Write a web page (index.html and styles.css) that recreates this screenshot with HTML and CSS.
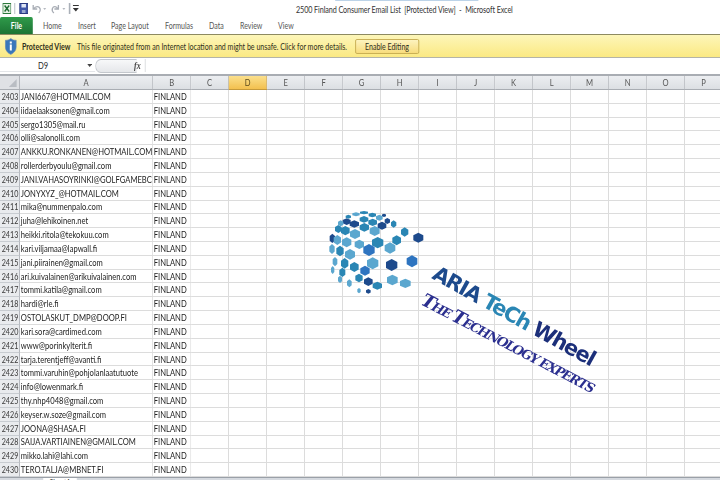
FILE: index.html
```html
<!DOCTYPE html>
<html lang="en">
<head>
<meta charset="utf-8">
<title>2500 Finland Consumer Email List</title>
<link rel="stylesheet" href="styles.css">
</head>
<body>
<div class="screen">
<div class="app">
  <header class="titlebar">
    <div class="qat">
      <svg class="ico-xl" viewBox="0 0 10 11" preserveAspectRatio="none"><rect x=".5" y=".5" width="9" height="10" fill="#e8f2e6" stroke="#2c7a3c"/><path d="M2.5 2.5l5 6M7.5 2.5l-5 6" stroke="#1d6b30" stroke-width="1.6"/></svg>
      <span class="qat-sep"></span>
      <svg class="ico-save" viewBox="0 0 10 11" preserveAspectRatio="none"><rect x=".5" y=".5" width="9" height="10" fill="#3f56a8" stroke="#2a3a80"/><rect x="2.5" y="1" width="5" height="3.5" fill="#dfe6f5"/><rect x="3" y="7" width="4" height="3" fill="#9aa8d0"/></svg>
      <svg class="ico-undo" viewBox="0 0 16 11" preserveAspectRatio="none"><path d="M2 2v4h4M2.5 6C4 3 8 2.500 9 6c.4 1.500-.5 3-1.500 4" fill="none" stroke="#a8adb5" stroke-width="1.300"/><path d="M12 5h3l-1.500 2z" fill="#b5b9c0"/></svg>
      <svg class="ico-undo" viewBox="0 0 16 11" preserveAspectRatio="none"><path d="M8 2v4H4M7.500 6C6 3 3 3 2 5.500c-.5 1.500.2 3.500 1.500 4.500" fill="none" stroke="#a8adb5" stroke-width="1.300"/><path d="M12 5h3l-1.500 2z" fill="#b5b9c0"/></svg>
      <span class="qat-sep"></span>
      <svg class="ico-more" viewBox="0 0 6 7" preserveAspectRatio="none"><path d="M0 .5h6" stroke="#333"/><path d="M0 3h6L3 6.500z" fill="#333"/></svg>
    </div>
    <div class="title">2500 Finland Consumer Email List&nbsp; [Protected View]&nbsp; -&nbsp; Microsoft Excel</div>
    <span class="title-glow"></span>
  </header>

  <nav class="tabs">
    <span class="tab-file">File</span>
    <span class="tab tab-home">Home</span>
    <span class="tab tab-insert">Insert</span>
    <span class="tab tab-layout">Page Layout</span>
    <span class="tab tab-formulas">Formulas</span>
    <span class="tab tab-data">Data</span>
    <span class="tab tab-review">Review</span>
    <span class="tab tab-view">View</span>
  </nav>

  <section class="notice">
    <svg class="shield" viewBox="0 0 12 17" preserveAspectRatio="none"><path d="M6 .5C4.500 1.800 2.500 2.300.5 2.300v6.500C.5 12.500 3 15 6 16.500c3-1.500 5.500-4 5.500-7.700V2.300C9.500 2.300 7.500 1.800 6 .5z" fill="#3a77bb" stroke="#6f8fb0" stroke-width=".6"/><rect x="5" y="6.500" width="2" height="6" fill="#fff"/><rect x="5" y="3.500" width="2" height="2" fill="#fff"/></svg>
    <strong class="notice-head">Protected View</strong>
    <span class="notice-text">This file originated from an Internet location and might be unsafe. Click for more details.</span>
    <span class="enable">Enable Editing</span>
  </section>

  <section class="formula">
    <div class="namebox"><span class="cellref">D9</span><svg class="caret" viewBox="0 0 6 4" preserveAspectRatio="none"><path d="M0 0h6L3 4z" fill="#444"/></svg></div>
    <div class="fxzone"><span class="pill"></span><em class="fx">fx</em></div>
    <div class="input"></div>
  </section>

  <main class="sheet">
    <div class="row head">
      <div class="rh corner"><svg viewBox="0 0 8 8" class="corner-tri" preserveAspectRatio="none"><path d="M8 0v8H0z" fill="#b9bdc3"/></svg></div>
      <div class="ch col-a">A</div><div class="ch col-b">B</div>
      <div class="ch col-n">C</div><div class="ch col-n sel">D</div><div class="ch col-n">E</div><div class="ch col-n">F</div><div class="ch col-n">G</div><div class="ch col-n">H</div><div class="ch col-n">I</div><div class="ch col-n">J</div><div class="ch col-n">K</div><div class="ch col-n">L</div><div class="ch col-n">M</div><div class="ch col-n">N</div><div class="ch col-n">O</div><div class="ch col-n">P</div>
    </div>
    <div class="row"><div class="rh">2403</div><div class="c col-a">JANI667@HOTMAIL.COM</div><div class="c col-b">FINLAND</div><div class="rest"></div></div>
    <div class="row"><div class="rh">2404</div><div class="c col-a">iidaelaaksonen@gmail.com</div><div class="c col-b">FINLAND</div><div class="rest"></div></div>
    <div class="row"><div class="rh">2405</div><div class="c col-a">sergo1305@mail.ru</div><div class="c col-b">FINLAND</div><div class="rest"></div></div>
    <div class="row"><div class="rh">2406</div><div class="c col-a">olli@salonolli.com</div><div class="c col-b">FINLAND</div><div class="rest"></div></div>
    <div class="row"><div class="rh">2407</div><div class="c col-a">ANKKU.RONKANEN@HOTMAIL.COM</div><div class="c col-b">FINLAND</div><div class="rest"></div></div>
    <div class="row"><div class="rh">2408</div><div class="c col-a">rollerderbyoulu@gmail.com</div><div class="c col-b">FINLAND</div><div class="rest"></div></div>
    <div class="row"><div class="rh">2409</div><div class="c col-a">JANI.VAHASOYRINKI@GOLFGAMEBC</div><div class="c col-b">FINLAND</div><div class="rest"></div></div>
    <div class="row"><div class="rh">2410</div><div class="c col-a">JONYXYZ_@HOTMAIL.COM</div><div class="c col-b">FINLAND</div><div class="rest"></div></div>
    <div class="row"><div class="rh">2411</div><div class="c col-a">mika@nummenpalo.com</div><div class="c col-b">FINLAND</div><div class="rest"></div></div>
    <div class="row"><div class="rh">2412</div><div class="c col-a">juha@lehikoinen.net</div><div class="c col-b">FINLAND</div><div class="rest"></div></div>
    <div class="row"><div class="rh">2413</div><div class="c col-a">heikki.ritola@tekokuu.com</div><div class="c col-b">FINLAND</div><div class="rest"></div></div>
    <div class="row"><div class="rh">2414</div><div class="c col-a">kari.viljamaa@lapwall.fi</div><div class="c col-b">FINLAND</div><div class="rest"></div></div>
    <div class="row"><div class="rh">2415</div><div class="c col-a">jani.piirainen@gmail.com</div><div class="c col-b">FINLAND</div><div class="rest"></div></div>
    <div class="row"><div class="rh">2416</div><div class="c col-a">ari.kuivalainen@arikuivalainen.com</div><div class="c col-b">FINLAND</div><div class="rest"></div></div>
    <div class="row"><div class="rh">2417</div><div class="c col-a">tommi.katila@gmail.com</div><div class="c col-b">FINLAND</div><div class="rest"></div></div>
    <div class="row"><div class="rh">2418</div><div class="c col-a">hardi@rle.fi</div><div class="c col-b">FINLAND</div><div class="rest"></div></div>
    <div class="row"><div class="rh">2419</div><div class="c col-a">OSTOLASKUT_DMP@DOOP.FI</div><div class="c col-b">FINLAND</div><div class="rest"></div></div>
    <div class="row"><div class="rh">2420</div><div class="c col-a">kari.sora@cardimed.com</div><div class="c col-b">FINLAND</div><div class="rest"></div></div>
    <div class="row"><div class="rh">2421</div><div class="c col-a">www@porinkylterit.fi</div><div class="c col-b">FINLAND</div><div class="rest"></div></div>
    <div class="row"><div class="rh">2422</div><div class="c col-a">tarja.terentjeff@avanti.fi</div><div class="c col-b">FINLAND</div><div class="rest"></div></div>
    <div class="row"><div class="rh">2423</div><div class="c col-a">tommi.varuhin@pohjolanlaatutuote</div><div class="c col-b">FINLAND</div><div class="rest"></div></div>
    <div class="row"><div class="rh">2424</div><div class="c col-a">info@lowenmark.fi</div><div class="c col-b">FINLAND</div><div class="rest"></div></div>
    <div class="row"><div class="rh">2425</div><div class="c col-a">thy.nhp4048@gmail.com</div><div class="c col-b">FINLAND</div><div class="rest"></div></div>
    <div class="row"><div class="rh">2426</div><div class="c col-a">keyser.w.soze@gmail.com</div><div class="c col-b">FINLAND</div><div class="rest"></div></div>
    <div class="row"><div class="rh">2427</div><div class="c col-a">JOONA@SHASA.FI</div><div class="c col-b">FINLAND</div><div class="rest"></div></div>
    <div class="row"><div class="rh">2428</div><div class="c col-a">SAIJA.VARTIAINEN@GMAIL.COM</div><div class="c col-b">FINLAND</div><div class="rest"></div></div>
    <div class="row"><div class="rh">2429</div><div class="c col-a">mikko.lahi@lahi.com</div><div class="c col-b">FINLAND</div><div class="rest"></div></div>
    <div class="row"><div class="rh">2430</div><div class="c col-a">TERO.TALJA@MBNET.FI</div><div class="c col-b">FINLAND</div><div class="rest"></div></div>
  </main>

  <footer class="sheettabs"><span class="sheet-tab">Sheet1</span></footer>
</div>

  <svg class="watermark" viewBox="0 0 720 480" aria-label="ARIA TeCh Wheel logo">
    <defs><polygon id="h" points="0,-1 1,-.5 1,.5 0,1 -1,.5 -1,-.5"/></defs>
    <g transform="translate(320 200) scale(.3333)">
      <g class="navy">
        <use href="#h" transform="translate(295 113) scale(15)"/><use href="#h" transform="translate(202 63) scale(8 9)"/><use href="#h" transform="translate(186 77) scale(13 12)"/><use href="#h" transform="translate(103 72) scale(14 11)"/><use href="#h" transform="translate(80 65) scale(12 10)"/><use href="#h" transform="translate(192 46) scale(6 5)"/><use href="#h" transform="translate(37 115) scale(8 14)"/><use href="#h" transform="translate(215 195) scale(17 18)"/><use href="#h" transform="translate(145 245) scale(13)"/><use href="#h" transform="translate(145 274) scale(7)"/>
      </g>
      <g class="teal">
        <use href="#h" transform="translate(254 96) scale(11 14)"/><use href="#h" transform="translate(221 72) scale(8 11)"/><use href="#h" transform="translate(133 82) scale(14 13)"/><use href="#h" transform="translate(132 58) scale(13 10)"/><use href="#h" transform="translate(158 67) scale(13 11)"/><use href="#h" transform="translate(157 45) scale(11 7)"/><use href="#h" transform="translate(132 38) scale(12 5)"/><use href="#h" transform="translate(85 50) scale(8 6)"/><use href="#h" transform="translate(76 92) scale(13 14)"/><use href="#h" transform="translate(55 87) scale(10 12)"/><use href="#h" transform="translate(173 128) scale(17)"/><use href="#h" transform="translate(230 121) scale(13 15)"/><use href="#h" transform="translate(60 153) scale(11 16)"/><use href="#h" transform="translate(74 190) scale(11 16)"/><use href="#h" transform="translate(103 201) scale(13 15)"/><use href="#h" transform="translate(67 217) scale(9 14)"/><use href="#h" transform="translate(117 234) scale(11 13)"/><use href="#h" transform="translate(172 257) scale(14 12)"/>
      </g>
      <g class="light">
        <use href="#h" transform="translate(164 93) scale(15)"/><use href="#h" transform="translate(178 53) scale(10 9)"/><use href="#h" transform="translate(108 43) scale(11 6)"/><use href="#h" transform="translate(62 70) scale(8 9)"/><use href="#h" transform="translate(105 102) scale(15)"/><use href="#h" transform="translate(210 144) scale(16 17)"/><use href="#h" transform="translate(80 127) scale(14 15)"/><use href="#h" transform="translate(52 120) scale(11 15)"/><use href="#h" transform="translate(118 133) scale(14)"/><use href="#h" transform="translate(36 147) scale(8 15)"/><use href="#h" transform="translate(90 163) scale(15 16)"/><use href="#h" transform="translate(158 190) scale(17 18)"/><use href="#h" transform="translate(45 185) scale(7 14)"/><use href="#h" transform="translate(217 240) scale(16)"/><use href="#h" transform="translate(256 250) scale(16 14)"/><use href="#h" transform="translate(117 272) scale(5 8)"/><use href="#h" transform="translate(88 250) scale(7 12)"/><use href="#h" transform="translate(60 238) scale(6 11)"/><use href="#h" transform="translate(38 210) scale(5 12)"/>
      </g>
      <g class="blue">
        <use href="#h" transform="translate(147 150) scale(17 18)"/><use href="#h" transform="translate(276 184) scale(16 18)"/><use href="#h" transform="translate(135 212) scale(14 15)"/>
      </g>
    </g>
    <text class="brand" transform="translate(431 278) rotate(29)" textLength="183" lengthAdjust="spacing"><tspan class="b-navy">ARIA </tspan><tspan class="b-teal">TeCh </tspan><tspan class="b-dark">Wheel</tspan></text>
    <text class="tag" transform="translate(420 304) rotate(27.500)" textLength="194" lengthAdjust="spacing"><tspan class="big">T</tspan>HE <tspan class="big">T</tspan>ECHNOLOGY EXPERTS</text>
  </svg>
</div>
</body>
</html>
```

FILE: styles.css
```css
* { box-sizing: border-box; margin: 0; padding: 0; }
html, body { width: 720px; height: 480px; overflow: hidden; background: #fff; }
body { font-family: Lato, "Liberation Sans", sans-serif; color: #2a2a2a; }

/* The source capture is squeezed horizontally, so the window is laid out 900px wide and narrowed to 720px. */
.screen { position: relative; width: 720px; height: 480px; overflow: hidden; filter: blur(.35px); }
.app { width: 900px; height: 480px; display: flex; flex-direction: column; transform: scaleX(.8); transform-origin: 0 0; }

/* title bar */
.titlebar { position: relative; height: 17px; flex: none; display: flex; align-items: center; background: #fff; }
.qat { display: flex; align-items: center; gap: 3.75px; padding-left: 1.25px; width: 370px; }
.ico-xl { width: 11.25px; height: 11px; margin-left: 1.25px; }
.qat-sep { width: 1.25px; height: 11px; background: #aab0b8; }
.ico-save { width: 11.25px; height: 11px; margin-left: 1.25px; }
.ico-undo { width: 20px; height: 11px; }
.ico-more { width: 7.5px; height: 7px; }
.title { font-size: 9px; letter-spacing: -.11px; white-space: nowrap; color: #333; padding-top: 1px; }
.title-glow { position: absolute; left: 418.75px; top: 0; width: 178.75px; height: 1px; background: #bcd3e8; }

/* ribbon tabs */
.tabs { height: 17px; flex: none; display: flex; align-items: center; font-size: 8.8px; color: #555; background: #fff; }
.tab-file { width: 41.25px; height: 17px; display: flex; align-items: center; justify-content: center; color: #fff; background: linear-gradient(#2f9a4a, #1c7434); border-radius: 2px 2px 0 0; font-weight: 700; }
.tab { white-space: nowrap; }
.tab-home { margin-left: 12.5px; width: 22.5px; }
.tab-insert { margin-left: 21.25px; width: 21.25px; }
.tab-layout { margin-left: 20px; width: 46.25px; }
.tab-formulas { margin-left: 21.25px; width: 35px; }
.tab-data { margin-left: 20px; width: 17.5px; }
.tab-review { margin-left: 21.25px; width: 26.25px; }
.tab-view { margin-left: 21.25px; width: 18.75px; }

/* protected view bar */
.notice { height: 24px; flex: none; display: flex; align-items: center; background: linear-gradient(#fdf6b9, #fbe983); border-top: 1px solid #8d8a60; border-bottom: 1px solid #b4b4a8; font-size: 8.8px; color: #2e2e20; }
.shield { width: 15px; height: 17px; margin-left: 6.25px; }
.notice-head { margin-left: 6.25px; width: 68.75px; font-weight: 700; white-space: nowrap; }
.notice-text { width: 347.5px; white-space: nowrap; }
.enable { width: 80px; height: 15px; display: flex; align-items: center; justify-content: center; border: 1px solid #c4a94e; border-radius: 2px; background: linear-gradient(#fdf3bf, #f7dc7c); white-space: nowrap; }

/* formula bar */
.formula { height: 18px; flex: none; display: flex; padding-top: 1px; padding-bottom: 2px; background: #fff; border-bottom: 2px solid #a9adb3; }
.namebox { width: 118.75px; display: flex; align-items: center; font-size: 9.5px; border-bottom: 1px solid #e3e5e8; }
.cellref { margin-left: 47.5px; width: 61.25px; }
.caret { width: 6.25px; height: 3px; }
.fxzone { width: 62.5px; display: flex; align-items: center; }
.pill { width: 52.5px; height: 14px; border: 1px solid #c3c7cc; border-right: 0; border-radius: 7px 0 0 7px; background: linear-gradient(#f7f8f9, #e5e7ea); }
.fx { font-family: "Liberation Serif", serif; font-size: 10px; font-weight: 700; margin-left: -3.75px; color: #444; }
.input { flex: 1; border-left: 1px solid #d5d7da; }

/* sheet */
.sheet { height: 401px; flex: none; display: grid; grid-template-rows: 14px repeat(28, 1fr); font-size: 9.5px; }
.row { display: flex; min-height: 0; }
.rh { width: 25px; flex: none; background: #e9ebee; border-right: 1px solid #a9adb3; border-bottom: 1px solid #c8ccd1; font-size: 9px; color: #3a3a3a; display: flex; align-items: center; justify-content: flex-end; padding-right: 1px; }
.head .ch { display: flex; align-items: center; justify-content: center; background: linear-gradient(#eceef1, #dcdfe3); border-right: 1px solid #a9adb3; border-bottom: 1px solid #a9adb3; color: #555; font-size: 9.5px; }
.corner { background: #dfe1e5; border-bottom-color: #a9adb3; }
.corner-tri { width: 10px; height: 8px; margin-right: 2px; }
.col-a { width: 166.25px; flex: none; }
.col-b { width: 47.5px; flex: none; }
.col-n { width: 47.5px; flex: none; }
.head .sel { background: linear-gradient(#fbe08c, #f3c04f); border-color: #c69a3a; color: #5b4a1b; }
.c { display: flex; align-items: center; padding-left: 1px; white-space: nowrap; overflow: hidden; border-right: 1px solid #dcdcdc; border-bottom: 1px solid #dcdcdc; color: #222; }
.rest { flex: 1; border-bottom: 1px solid #dcdcdc; background: repeating-linear-gradient(90deg, #fff 0 46.5px, #dcdcdc 46.5px 47.5px); }

/* sheet tabs */
.sheettabs { flex: 1; background: #d5d9df; border-top: 1px solid #9aa0a8; font-size: 8.5px; padding-left: 53.75px; overflow: hidden; }
.sheet-tab { display: block; width: 42.5px; height: 12px; background: #fff; text-align: center; line-height: 11px; }

/* watermark */
.watermark { position: absolute; left: 0; top: 0; width: 720px; height: 480px; pointer-events: none; }
.navy { fill: #1d4a8c; }
.teal { fill: #2a86b4; }
.light { fill: #5ba7cf; }
.blue { fill: #2e74c0; }
.brand { font-family: "DejaVu Sans", sans-serif; font-weight: 700; font-size: 21px; }
.b-navy { fill: #1d4a8c; }
.b-teal { fill: #2a86b4; }
.b-dark { fill: #1c2f7a; }
.tag { font-family: "DejaVu Serif", serif; font-weight: 700; font-style: italic; font-size: 13px; fill: #2b2f8f; }
.big { font-size: 18px; }
```
